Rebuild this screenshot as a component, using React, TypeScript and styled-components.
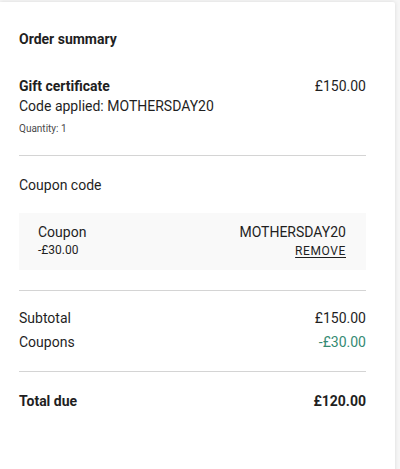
import React from "react";
import styled, { createGlobalStyle } from "styled-components";

const GlobalStyle = createGlobalStyle`
  html, body {
    margin: 0;
    padding: 0;
    background: #f6f6f6;
    font-family: Roboto, "Noto Sans", Arial, sans-serif;
    color: #1f1f1f;
    -webkit-font-smoothing: antialiased;
  }
  * { box-sizing: border-box; }
`;

const Page = styled.div`
  padding-top: 2px;
  min-height: 469px;
  overflow: hidden;
`;

const Card = styled.section`
  width: 395px;
  min-height: 480px;
  background: #ffffff;
  box-shadow: 0 0 4px rgba(0, 0, 0, 0.12);
  border-top-right-radius: 2px;
  padding: 27px 29px 40px 19px;
`;

const Title = styled.h2`
  margin: 0 0 27px;
  font-size: 14px;
  line-height: 20px;
  font-weight: 700;
`;

const Row = styled.div<{ $gap?: number }>`
  display: flex;
  justify-content: space-between;
  align-items: flex-start;
  margin-top: ${(p) => p.$gap ?? 0}px;
`;

const Col = styled.div<{ $align?: "left" | "right" }>`
  display: flex;
  flex-direction: column;
  align-items: ${(p) => (p.$align === "right" ? "flex-end" : "flex-start")};
`;

const Text = styled.span<{ $bold?: boolean; $color?: string }>`
  font-size: 14px;
  line-height: 20px;
  font-weight: ${(p) => (p.$bold ? 700 : 400)};
  color: ${(p) => p.$color ?? "#1f1f1f"};
`;

const Small = styled.span`
  font-size: 10px;
  line-height: 14px;
  color: #4a4a4a;
  margin-top: 6px;
`;

const Minor = styled.span`
  font-size: 12px;
  line-height: 16px;
  color: #1f1f1f;
`;

const Divider = styled.hr<{ $top: number }>`
  border: 0;
  height: 1px;
  background: #d4d4d4;
  margin: ${(p) => p.$top}px 0 0;
`;

const Section = styled.div<{ $top: number }>`
  margin-top: ${(p) => p.$top}px;
`;

const CouponBox = styled.div`
  margin-top: 18px;
  background: #f9f9f9;
  padding: 9px 20px 11px 19px;
  display: flex;
  justify-content: space-between;
  align-items: flex-start;
`;

const RemoveButton = styled.button`
  border: 0;
  background: none;
  padding: 0;
  margin-top: 1px;
  font-family: inherit;
  font-size: 12px;
  line-height: 16px;
  letter-spacing: 0.6px;
  color: #1f1f1f;
  text-decoration: underline;
  text-underline-offset: 2px;
  cursor: pointer;
`;

export default function App() {
  return (
    <>
      <GlobalStyle />
      <Page>
        <Card>
          <Title>Order summary</Title>

          <Row>
            <Col>
              <Text $bold>Gift certificate</Text>
              <Text>Code applied: MOTHERSDAY20</Text>
              <Small>Quantity: 1</Small>
            </Col>
            <Text>£150.00</Text>
          </Row>

          <Divider $top={19} />

          <Section $top={19}>
            <Text>Coupon code</Text>
            <CouponBox>
              <Col>
                <Text>Coupon</Text>
                <Minor>-£30.00</Minor>
              </Col>
              <Col $align="right">
                <Text>MOTHERSDAY20</Text>
                <RemoveButton type="button">REMOVE</RemoveButton>
              </Col>
            </CouponBox>
          </Section>

          <Divider $top={20} />

          <Row $gap={17}>
            <Text>Subtotal</Text>
            <Text>£150.00</Text>
          </Row>
          <Row $gap={4}>
            <Text>Coupons</Text>
            <Text $color="#358a73">-£30.00</Text>
          </Row>

          <Divider $top={19} />

          <Row $gap={19}>
            <Text $bold>Total due</Text>
            <Text $bold>£120.00</Text>
          </Row>
        </Card>
      </Page>
    </>
  );
}
